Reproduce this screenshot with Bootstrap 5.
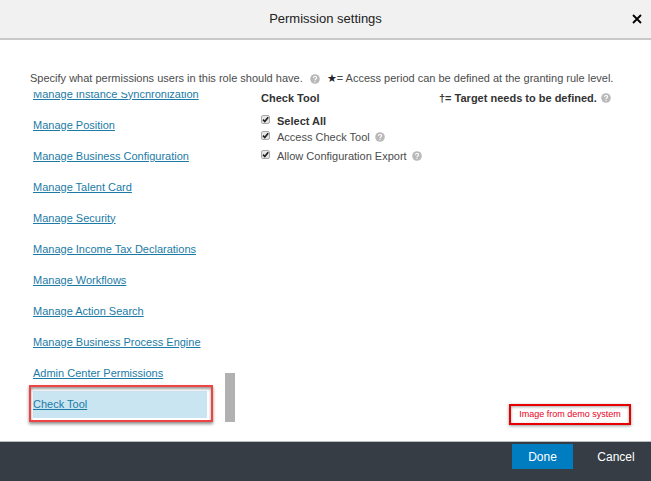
<!DOCTYPE html>
<html lang="en">
<head>
<meta charset="utf-8">
<meta name="viewport" content="width=device-width, initial-scale=1">
<title>Permission settings</title>
<link rel="stylesheet" href="https://cdn.jsdelivr.net/npm/bootstrap@5.3.0/dist/css/bootstrap.min.css">
<style>
body { font-family: "Liberation Sans", Arial, sans-serif; font-size: 11px; line-height: 16px; color: #4c4c4c; background: #fff; }
.dialog-head { height: 40px; padding: 0 6px 0 22px; background: #f1f1f1; border-bottom: 2px solid #c9c9c9; color: #222; }
.dialog-head h1 { font-size: 13px; line-height: 20px; }
.close-x { width: 16px; height: 20px; color: #000; }
.dialog-main { padding: 30px 20px 16px 30px; min-height: 0; }
.intro { height: 22px; column-gap: 7px; }
.help { width: 10px; height: 10px; flex: none; }
.work-area { min-height: 0; }
.side { width: 205px; margin-bottom: 3px; }
.side-scroll { width: 187px; scrollbar-width: none; }
.side-scroll::-webkit-scrollbar { display: none; }
.side-list a { height: 27px; margin: 0 10px 4px 3px; padding-bottom: 2px; color: #1b7ba6; white-space: nowrap; text-underline-offset: 1px; }
.side-list a.current { background: #c9e5f1; }
.thumb { width: 10px; height: 49px; background: #b1b1b1; }
.callout-box { left: -1px; right: 22px; bottom: 0; height: 37px; border: 2px solid #ee4444; box-shadow: 0 2px 3px rgba(0,0,0,.45), inset 0 2px 3px rgba(0,0,0,.4); pointer-events: none; }
.detail { padding-left: 26px; }
.strong-text { font-weight: bold; color: #333; }
.detail-head { height: 12px; margin-bottom: 9px; }
.target-note { width: 192px; column-gap: 4px; }
.perm { height: 16px; column-gap: 7px; }
.perm.spaced { margin-top: 3px; }
.perm .help { margin-left: -2px; }
.perm .form-check-input { width: 9px; height: 9px; margin: 0 0 3px; border: 1px solid #a9a9a9; border-radius: 2px; background-color: #e9e9e9; box-shadow: none; }
.perm .form-check-input:checked { background-color: #e6e6e6; border-color: #a9a9a9; background-size: 9px 9px; background-image: url("data:image/svg+xml,%3Csvg xmlns='http://www.w3.org/2000/svg' viewBox='0 0 9 9'%3E%3Cpath d='M2 4.6 3.8 6.5 7.2 2.2' fill='none' stroke='%23222' stroke-width='1.7'/%3E%3C/svg%3E"); }
.demo-tag { height: 21px; width: 122px; font-size: 9px; line-height: 16px; color: #e8001c; border: 2px solid #e80000; box-shadow: 0 1px 3px rgba(0,0,0,.4), inset 0 1px 3px rgba(0,0,0,.35); }
.dialog-foot { height: 40px; background: #363d44; border-top: 1px solid #b8bcc0; padding: 2px 3px 0 0; }
.dialog-foot .btn { font-size: 12px; line-height: 16px; height: 25px; padding: 0; border: 0; border-radius: 0; color: #fff; }
.btn-done, .dialog-foot .btn-done:hover { width: 61px; background: #007cc0; }
.btn-cancel { width: 64px; margin-left: 11px; }
</style>
<script src="https://cdn.jsdelivr.net/npm/bootstrap@5.3.0/dist/js/bootstrap.bundle.min.js"></script>
</head>
<body>
<svg class="d-none" aria-hidden="true">
  <symbol id="help" viewBox="0 0 10 10">
    <circle cx="5" cy="5" r="4.8" fill="#b9b9b9"/>
    <path d="M3.4 3.9C3.5 2 6.6 2 6.6 3.8 6.6 5 5 4.9 5 6.2" fill="none" stroke="#fff" stroke-width="1.1"/>
    <circle cx="5" cy="7.6" r=".7" fill="#fff"/>
  </symbol>
</svg>
<div class="d-flex flex-column vh-100">
  <header class="dialog-head d-flex align-items-center flex-shrink-0">
    <h1 class="flex-grow-1 text-center m-0 fw-normal">Permission settings</h1>
    <button type="button" class="close-x btn p-0 border-0 d-flex align-items-center justify-content-center" aria-label="Close">
      <svg width="10" height="10" viewBox="0 0 10 10"><path d="M1 1 9 9M9 1 1 9" stroke="currentColor" stroke-width="1.8"/></svg>
    </button>
  </header>

  <main class="dialog-main d-flex flex-column flex-grow-1">
    <div class="intro d-flex align-items-start flex-shrink-0 text-nowrap">
      <span>Specify what permissions users in this role should have.</span>
      <svg class="help mt-1"><use href="#help"/></svg>
      <span><span class="text-dark">★</span>= Access period can be defined at the granting rule level.</span>
    </div>

    <div class="work-area d-flex flex-grow-1">
      <div class="side d-flex justify-content-between align-items-end position-relative flex-shrink-0">
        <div class="side-scroll h-100 d-flex flex-column-reverse overflow-auto">
          <nav class="side-list" aria-label="Permission groups">
            <a class="d-flex align-items-center" href="#">Manage Instance Synchronization</a>
            <a class="d-flex align-items-center" href="#">Manage Position</a>
            <a class="d-flex align-items-center" href="#">Manage Business Configuration</a>
            <a class="d-flex align-items-center" href="#">Manage Talent Card</a>
            <a class="d-flex align-items-center" href="#">Manage Security</a>
            <a class="d-flex align-items-center" href="#">Manage Income Tax Declarations</a>
            <a class="d-flex align-items-center" href="#">Manage Workflows</a>
            <a class="d-flex align-items-center" href="#">Manage Action Search</a>
            <a class="d-flex align-items-center" href="#">Manage Business Process Engine</a>
            <a class="d-flex align-items-center" href="#">Admin Center Permissions</a>
            <a class="d-flex align-items-center current" href="#" aria-current="true">Check Tool</a>
          </nav>
        </div>
        <div class="thumb"></div>
        <div class="callout-box position-absolute"></div>
      </div>

      <section class="detail flex-grow-1 d-flex flex-column">
        <div class="detail-head d-flex align-items-center justify-content-between text-nowrap strong-text">
          <span>Check Tool</span>
          <span class="target-note d-flex align-items-center"><span>†= Target needs to be defined.</span><svg class="help"><use href="#help"/></svg></span>
        </div>
        <div class="perm d-flex align-items-center">
          <input class="form-check-input" type="checkbox" id="all" checked><label class="strong-text" for="all">Select All</label>
        </div>
        <div class="perm d-flex align-items-center">
          <input class="form-check-input" type="checkbox" id="access" checked><label for="access">Access Check Tool</label><svg class="help"><use href="#help"/></svg>
        </div>
        <div class="perm spaced d-flex align-items-center">
          <input class="form-check-input" type="checkbox" id="export" checked><label for="export">Allow Configuration Export</label><svg class="help"><use href="#help"/></svg>
        </div>
        <div class="demo-tag text-center mt-auto align-self-end">Image from demo system</div>
      </section>
    </div>
  </main>

  <footer class="dialog-foot d-flex justify-content-end flex-shrink-0">
    <button type="button" class="btn btn-done">Done</button>
    <button type="button" class="btn btn-cancel">Cancel</button>
  </footer>
</div>
</body>
</html>
